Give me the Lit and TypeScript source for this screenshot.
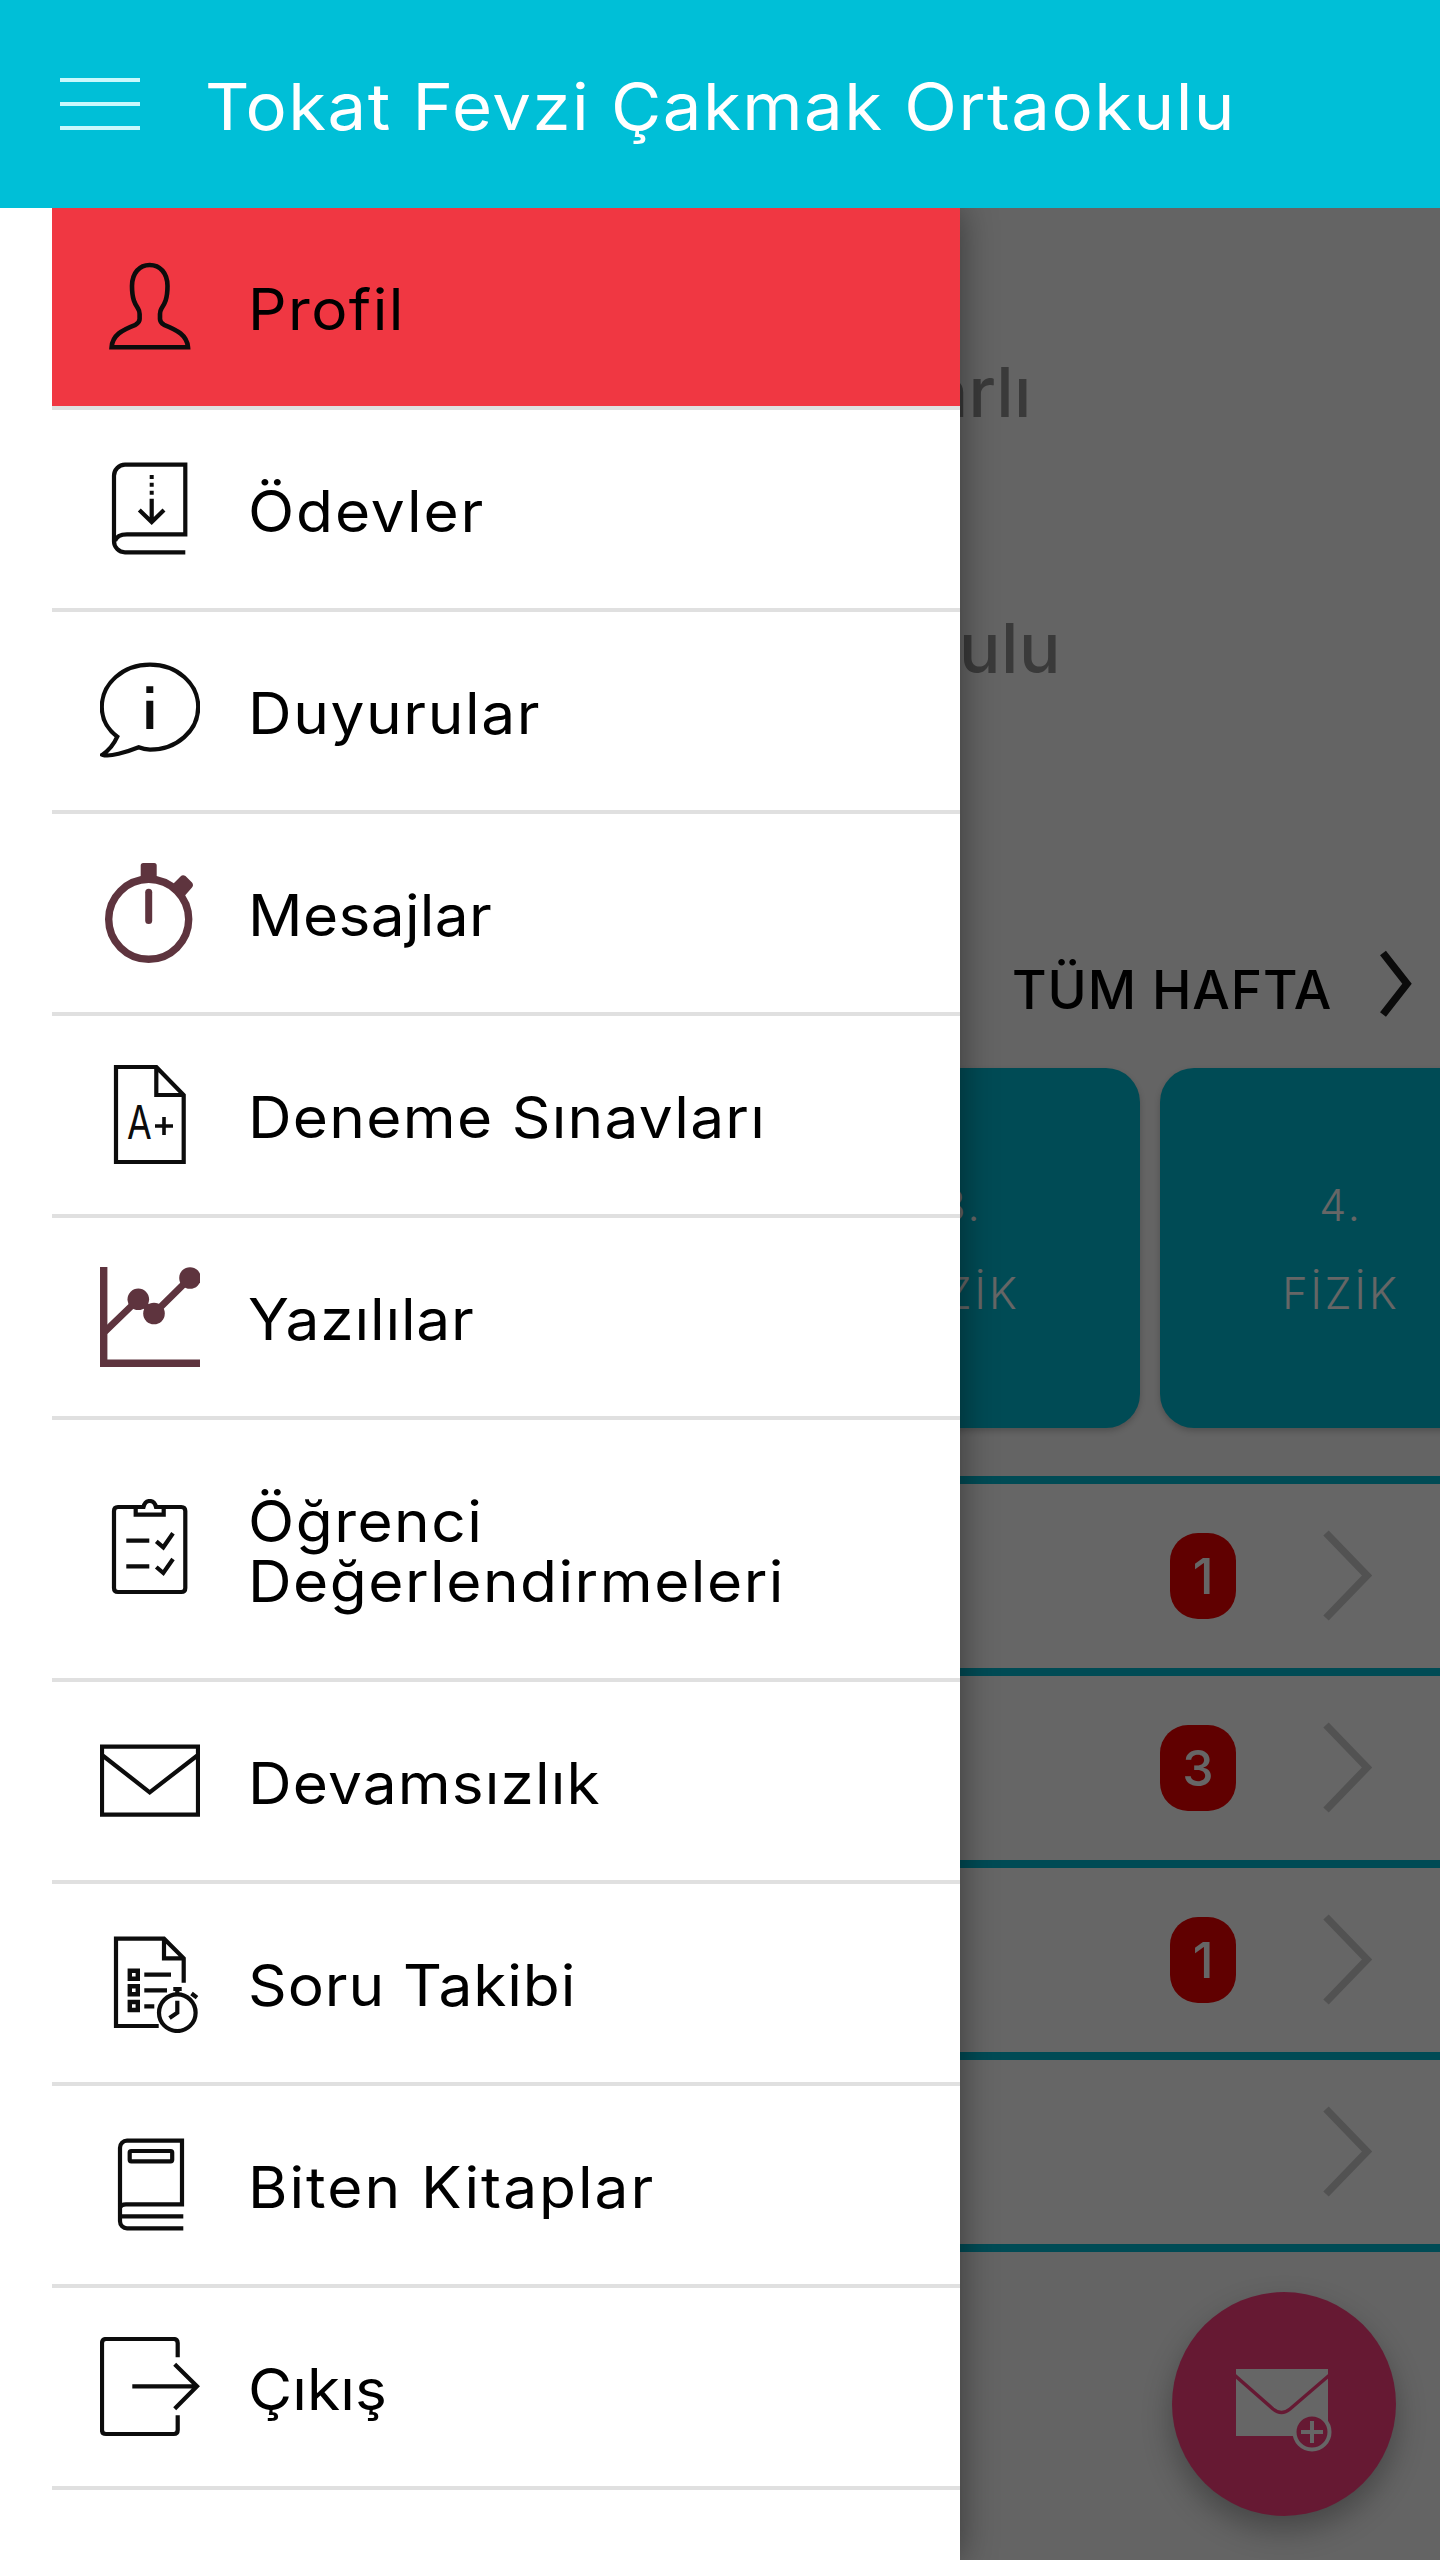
import { LitElement, html, css, svg, TemplateResult, SVGTemplateResult } from "lit";
import { customElement, property } from "lit/decorators.js";
import { classMap } from "lit/directives/class-map.js";
import { styleMap } from "lit/directives/style-map.js";

const INK = "#0c0c0c";
const PLUM = "#5e343e";

/* Menu glyphs, each drawn on a 100 x 100 grid. */
const ICONS: Record<string, SVGTemplateResult> = {
  profile: svg`
    <path d="M49.7 8C60 8 67.5 16 67.5 29C67.5 42 64.5 47 61.5 51.5Q60 54 60 57V62C60 65 61 66 64 67.8C77 73 87 78 88 90.3H11.6C12.5 78 22 73 35.5 67.8C38.5 66 39.6 65 39.6 62V57Q39.6 54 38 51.5C35 47 32 42 32 29C32 16 39.5 8 49.7 8Z" stroke-width="4.6"/>`,
  homework: svg`
    <path d="M85.3 93.3H25A11 11 0 0 1 14 82.3V16.7A11 11 0 0 1 25 5.7H85.3V75.3H27Q17 75.3 15 82"/>
    <path d="M51.7 39.7V62M39.3 51L51.7 63L64 51"/>
    <path d="M49.7 16h4v4h-4zM49.7 23.8h4v4h-4zM49.7 31.8h4v4h-4z" fill="${INK}" stroke="none"/>`,
  notices: svg`
    <path d="M17.3 75.7C7 68 1.8 57 1.8 46C1.8 22.5 23 3.7 50 3.7S98.2 22.5 98.2 46S77 88.7 50 88.7Q44 88.5 38.7 86.3C27 91 9 96.5 2.5 93.7C8 90 14 83 17.3 75.7Z"/>
    <path d="M46.3 25.3h7v6.7h-7zM46.3 39.7h7v28.3h-7z" fill="${INK}" stroke="none"/>`,
  messages: svg`
    <circle cx="48.7" cy="56.3" r="40" stroke="${PLUM}" stroke-width="7.4"/>
    <path d="M48.7 29.2V57.5" stroke="${PLUM}" stroke-width="7" stroke-linecap="round"/>
    <path d="M40.7 2.5Q40.7 0 43.2 0H54.2Q56.7 0 56.7 2.5V13L60 18H37.5L40.7 13Z" fill="${PLUM}" stroke="none"/>
    <path d="M73 21L80.5 13.4Q82.7 11.3 85.5 13L92 19.5Q94 22.3 92 24.5L85 32.5L83 36L69 22.5Z" fill="${PLUM}" stroke="none"/>`,
  exams: svg`
    <path d="M56.3 2H16V97H83.7V30L56.3 2V30H83.7"/>
    <path d="M55 61H73M64 52V70" stroke-width="3.6"/>
    <text transform="translate(39.5 73.5) scale(0.78 1)" text-anchor="middle" class="mark">A</text>`,
  written: svg`
    <path d="M3.7 0V96.3H100" stroke="${PLUM}" stroke-width="7.4"/>
    <path d="M5 64.5L38.3 32.3L54 46.5L90 11" stroke="${PLUM}" stroke-width="6.8"/>
    <g fill="${PLUM}" stroke="none"><circle cx="38.3" cy="32.3" r="10.8"/><circle cx="54" cy="46.5" r="10.8"/><circle cx="90" cy="11" r="10.8"/></g>`,
  reviews: svg`
    <path d="M36 8H18Q14 8 14 12V89Q14 93 18 93H81.3Q85.3 93 85.3 89V12Q85.3 8 81.3 8H63.7"/>
    <path d="M35.7 8H43.5C44.5 4 46.5 2 49.7 2S55 4 56 8H63.7V15.7H35.7Z"/>
    <path d="M26.3 41.7H49.3M26.3 67.3H49.3M56.3 42.3L63.3 48.3L73 34.3M56.3 68L63.3 74L73 60"/>`,
  absence: svg`
    <path d="M2 15.7H98V83.7H2ZM2 24L49.7 61.3L98 24"/>`,
  tracking: svg`
    <path d="M83.7 49.7V25.3L64 5.7H16V93H58.7M64 5.7V25.3H83.7"/>
    <path d="M29.8 37.7h8v8h-8zM29.8 53.3h8v8h-8zM29.8 69h8v8h-8z" stroke-width="4.4"/>
    <path d="M44.3 41.7H71M44.3 57.3H67M44.3 73.3H54.3"/>
    <circle cx="77.3" cy="79.7" r="18.3"/>
    <path d="M73.3 56H81.7M77.3 56V61M91.5 60.5L97 64.7M77.3 67.7V79.7L69.5 85"/>`,
  books: svg`
    <path d="M83.3 93.3H27A7 7 0 0 1 20 86.3V12.7A7 7 0 0 1 27 5.7H82V69.3H26Q21 69.3 20 73M83.3 81.3H20"/>
    <rect x="29.7" y="16" width="42.5" height="10.3" rx="1.5"/>`,
  exit: svg`
    <path d="M77.7 20.3V6Q77.7 2 73.7 2H6Q2 2 2 6V93Q2 97 6 97H73.7Q77.7 97 77.7 93V78.3"/>
    <path d="M32.3 49.3H97M74.7 27.3L97 49.3L74.7 71.7"/>`,
};

interface MenuEntry {
  icon: string;
  text: string;
  tracking: number;
}

const MENU: MenuEntry[] = [
  { icon: "profile", text: "Profil", tracking: 1.35 },
  { icon: "homework", text: "Ödevler", tracking: 1.76 },
  { icon: "notices", text: "Duyurular", tracking: 1.49 },
  { icon: "messages", text: "Mesajlar", tracking: 0.3 },
  { icon: "exams", text: "Deneme Sınavları", tracking: 1.18 },
  { icon: "written", text: "Yazılılar", tracking: 0.78 },
  { icon: "reviews", text: "Öğrenci Değerlendirmeleri", tracking: 1.38 },
  { icon: "absence", text: "Devamsızlık", tracking: 1.05 },
  { icon: "tracking", text: "Soru Takibi", tracking: 0.85 },
  { icon: "books", text: "Biten Kitaplar", tracking: 1.85 },
  { icon: "exit", text: "Çıkış", tracking: 0.1 },
];

@customElement("menu-item")
export class MenuItem extends LitElement {
  @property({ attribute: false }) entry!: MenuEntry;
  @property({ type: Boolean }) active = false;

  static styles = css`
    :host { display: block; }
    .item {
      display: flex;
      align-items: center;
      gap: 48px;
      padding: 66px 0 66px 48px;
      border-bottom: 4px solid #e0e0e0;
      background: #fff;
    }
    .item.active { background: #f03742; }
    .icon { flex: none; width: 100px; height: 100px; margin: -20px 0; fill: none; }
    .mark { font: 400 46px "Inter", sans-serif; fill: #0c0c0c; stroke: none; }
    .label {
      width: 560px;
      padding-top: 6px;
      font-size: 57px;
      line-height: 60px;
      color: #000;
      transform: scaleX(1.06);
      transform-origin: 0 50%;
    }
  `;

  render() {
    const { icon, text, tracking } = this.entry;
    return html`
      <div class=${classMap({ item: true, active: this.active })}>
        <svg class="icon" viewBox="0 0 100 100" stroke=${INK} stroke-width="4.2">${ICONS[icon]}</svg>
        <div class="label" style=${styleMap({ letterSpacing: `${tracking}px` })}>${text}</div>
      </div>
    `;
  }
}

@customElement("app-root")
export class AppRoot extends LitElement {
  static styles = css`
    :host {
      display: flex;
      flex-direction: column;
      height: 2560px;
      overflow: hidden;
      font-family: "Inter", "Liberation Sans", sans-serif;
      color: #000;
    }
    .bar {
      flex: none;
      display: flex;
      align-items: center;
      gap: 65px;
      height: 208px;
      padding-left: 60px;
      box-sizing: border-box;
      background: #00bfd7;
    }
    .burger { display: grid; gap: 19.7px; width: 80px; }
    .burger i { display: block; height: 4px; background: #c9f8fc; }
    .title {
      margin: 0;
      padding-top: 6px;
      font-size: 65px;
      font-weight: 400;
      line-height: 80px;
      letter-spacing: 1.38px;
      color: #fff;
      white-space: nowrap;
      transform: scaleX(1.06);
      transform-origin: 0 50%;
    }
    .stage { position: relative; flex: 1; background: #f9f9f9; overflow: hidden; }
    .content { display: flex; flex-direction: column; padding-top: 144px; }
    .who {
      display: grid;
      row-gap: 176px;
      font-size: 69px;
      font-weight: 500;
      line-height: 80px;
      color: #919191;
    }
    .name { padding-left: 929px; letter-spacing: 0.2px; }
    .school { padding-left: 959px; letter-spacing: 0.5px; }
    .week {
      display: flex;
      align-items: center;
      gap: 47px;
      height: 72px;
      margin-top: 260px;
      padding-left: 1012px;
      font-size: 53px;
      font-weight: 500;
      letter-spacing: 0.9px;
      white-space: nowrap;
    }
    .week span { padding-top: 12px; line-height: 60px; }
    .week svg { flex: none; }
    .cards { display: flex; gap: 20px; margin-top: 48px; padding-left: 780px; }
    .card {
      flex: none;
      display: grid;
      align-content: center;
      width: 360px;
      height: 360px;
      padding: 2px 0 0 2px;
      box-sizing: border-box;
      border-radius: 34px;
      background: #00bcd4;
      box-shadow: 0 3px 6px rgba(0, 0, 0, 0.2);
      color: #fff;
      font-size: 43px;
      font-weight: 350;
      line-height: 88px;
      letter-spacing: 3px;
      text-align: center;
    }
    .list { margin-top: 48px; border-top: 8px solid #00bcd4; }
    .row {
      display: flex;
      justify-content: flex-end;
      align-items: center;
      gap: 86px;
      height: 184px;
      padding-right: 66px;
      border-bottom: 8px solid #00bcd4;
      background: #fff;
    }
    .badge {
      padding: 0 22.500px;
      height: 86px;
      border-radius: 28px;
      background: #f00000;
      color: #fff;
      font-size: 50px;
      font-weight: 500;
      line-height: 86px;
      text-align: center;
    }
    .fab {
      position: absolute;
      right: 44px;
      bottom: 44px;
      display: grid;
      place-items: center;
      width: 224px;
      height: 224px;
      border-radius: 50%;
      background: #ff4081;
      box-shadow: 0 14px 30px rgba(0, 0, 0, 0.3);
    }
    .fab svg { margin-top: 10px; }
    .scrim { position: absolute; inset: 0; background: rgba(0, 0, 0, 0.6); }
    .drawer {
      position: absolute;
      inset: 0 auto 0 0;
      width: 960px;
      padding-left: 52px;
      box-sizing: border-box;
      background: #fff;
      box-shadow: 0 0 34px rgba(0, 0, 0, 0.45);
    }
  `;

  private readonly counts = ["1", "3", "1", ""];
  private readonly lessons = [
    { hour: "3.", name: "FİZİK" },
    { hour: "4.", name: "FİZİK" },
  ];

  private row(count: string): TemplateResult {
    return html`
      <div class="row">
        ${count ? html`<span class="badge">${count}</span>` : ""}
        <svg width="52" height="96" viewBox="0 0 52 96" fill="none" stroke="#cdcdcd" stroke-width="7.5">
          <path d="M4 5L45 47.5L4 90" />
        </svg>
      </div>
    `;
  }

  render() {
    return html`
      <header class="bar">
        <div class="burger"><i></i><i></i><i></i></div>
        <h1 class="title">Tokat Fevzi Çakmak Ortaokulu</h1>
      </header>
      <div class="stage">
        <main class="content">
          <div class="who">
            <div class="name">arlı</div>
            <div class="school">ulu</div>
          </div>
          <div class="week">
            <span>TÜM HAFTA</span>
            <svg width="36" height="72" viewBox="0 0 36 72" fill="none" stroke="#1c1c1c" stroke-width="7.5">
              <path d="M4 5L28 35.7L4 66.5" />
            </svg>
          </div>
          <div class="cards">
            ${this.lessons.map((l) => html`<div class="card"><span>${l.hour}</span><span>${l.name}</span></div>`)}
          </div>
          <div class="list">${this.counts.map((c) => this.row(c))}</div>
        </main>
        <div class="fab">
          <svg width="100" height="90" viewBox="0 0 100 90" fill="none">
            <path d="M2 5H94V72H2Z" fill="#fff" />
            <path d="M1 11.5L39 45Q47.5 52 56 45L95 11.5" stroke="#ff4081" stroke-width="3.5" />
            <circle cx="78" cy="68" r="17.5" fill="#ff4081" stroke="#fff" stroke-width="4" />
            <path d="M67 68H89M78 57V79" stroke="#fff" stroke-width="4" />
          </svg>
        </div>
        <div class="scrim"></div>
        <nav class="drawer">
          ${MENU.map((entry, i) => html`<menu-item .entry=${entry} ?active=${i === 0}></menu-item>`)}
        </nav>
      </div>
    `;
  }
}
